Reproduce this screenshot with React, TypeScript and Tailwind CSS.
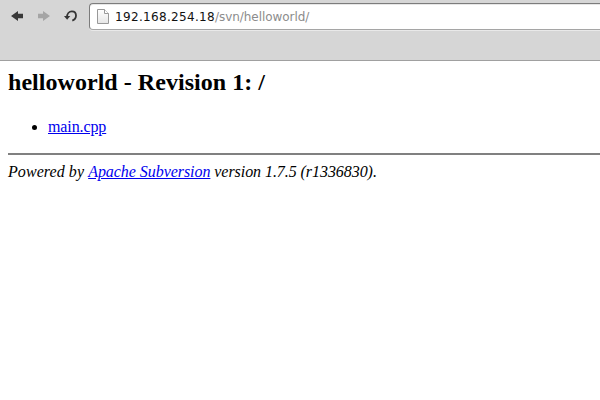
function BackIcon({ color }: { color: string }) {
  return (
    <svg width="12" height="10" viewBox="0 0 12 10" fill={color} aria-hidden="true">
      <path d="M0 5 7 0V2.8H12V7.2H7V10Z" />
    </svg>
  );
}

function ReloadIcon() {
  return (
    <svg width="14" height="13" viewBox="0 0 14 13" fill="none" aria-hidden="true">
      <path d="M3 7.2C3 3.8 5 1.3 7.9 1.3C10.5 1.3 12 3.2 12 5.6C12 8 10.7 9.8 8.3 10.7" stroke="#353535" strokeWidth="1.8" />
      <path d="M0 5.9H6.3L3.1 9.7Z" fill="#353535" />
    </svg>
  );
}

function PageIcon() {
  return (
    <svg width="12" height="16" viewBox="0 0 12 16" aria-hidden="true">
      <defs>
        <linearGradient id="paper" x1="0" y1="0" x2="0" y2="1">
          <stop offset="0" stopColor="#ffffff" />
          <stop offset="1" stopColor="#e6e6e6" />
        </linearGradient>
      </defs>
      <path d="M.5 .5H7.5L11.5 4.5V14.5H.5Z" fill="url(#paper)" stroke="#999" />
      <path d="M7.5 .5V4.5H11.5" fill="#fff" stroke="#999" />
    </svg>
  );
}

export default function App() {
  return (
    <div className="h-[400px] w-[600px] overflow-hidden bg-white">
      <header className="h-[61px] border-b border-[#a0a0a0] bg-[#d6d6d6] pt-[3px]">
        <div className="flex items-start">
          <nav className="flex w-[89px] shrink-0 pl-[11px] pt-[8px]">
            <button aria-label="Back" className="h-[10px] w-[12px]">
              <BackIcon color="#393939" />
            </button>
            <button aria-label="Forward" className="ml-[15px] h-[10px] w-[12px] -scale-x-100">
              <BackIcon color="#a5a5a5" />
            </button>
            <button aria-label="Reload" className="-mt-px ml-[14px] h-[13px] w-[14px]">
              <ReloadIcon />
            </button>
          </nav>
          <div className="flex h-[27px] flex-1 rounded-l-[4px] border border-r-0 border-[#7c7c7c] border-b-[#a5a5a5] bg-white pl-[7px] pt-[5px] shadow-[inset_0_1px_0_#e7e7e7,0_1px_0_#e9e9e9]">
            <PageIcon />
            <span className="ml-[6px] whitespace-nowrap font-['DejaVu_Sans',sans-serif] text-[12px] leading-[16px] tracking-[-0.06px] text-[#8c8c8c]">
              <span className="tracking-[0.33px] text-[#111]">192.168.254.18</span>/svn/helloworld/
            </span>
          </div>
        </div>
      </header>
      <main className="pl-[8px] font-['Liberation_Serif',serif] text-[16px] leading-[18px] text-black">
        <h2 className="pt-[8px] text-[24px] font-bold leading-[27px] tracking-[0.04px]">helloworld - Revision 1: /</h2>
        <ul className="mt-[22px] list-disc pl-[40px]">
          <li>
            <a href="#" className="tracking-[-0.11px] text-[#0000ee] underline">main.cpp</a>
          </li>
        </ul>
        <hr className="mt-[17px] border-0 border-t-2 border-[#808080]" />
        <p className="mt-[8px] italic">
          <span className="tracking-[0.07px]">Powered by </span>
          <a href="#" className="tracking-[-0.05px] text-[#0000ee] underline">Apache Subversion</a>
          <span className="tracking-[-0.06px]"> version 1.7.5 (r1336830).</span>
        </p>
      </main>
    </div>
  );
}
